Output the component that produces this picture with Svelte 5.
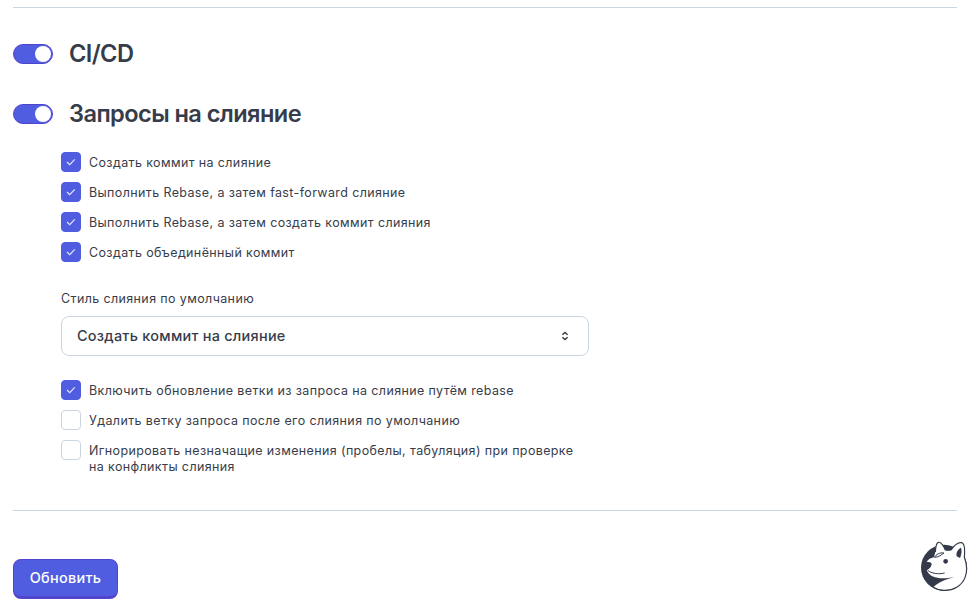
<script lang="ts">
	let cicd = $state(true);
	let mergeRequests = $state(true);

	let mergeStyles = $state([
		{ label: 'Создать коммит на слияние', checked: true },
		{ label: 'Выполнить Rebase, а затем fast-forward слияние', checked: true },
		{ label: 'Выполнить Rebase, а затем создать коммит слияния', checked: true },
		{ label: 'Создать объединённый коммит', checked: true }
	]);

	let options = $state([
		{ label: 'Включить обновление ветки из запроса на слияние путём rebase', checked: true },
		{ label: 'Удалить ветку запроса после его слияния по умолчанию', checked: false },
		{
			label: 'Игнорировать незначащие изменения (пробелы, табуляция) при проверке на конфликты слияния',
			checked: false
		}
	]);
</script>

{#snippet checkbox(item: { label: string; checked: boolean })}
	<label class="check">
		<input type="checkbox" bind:checked={item.checked} />
		<span class="box">
			{#if item.checked}
				<svg width="10" height="8" viewBox="0 0 10 8">
					<path d="M1 4l2.7 2.6L8.8 1.4" fill="none" stroke="#e4e7fb" stroke-width="1.2" />
				</svg>
			{/if}
		</span>
		<span class="check-text">{item.label}</span>
	</label>
{/snippet}

<main class="settings">
	<hr />

	<section class="unit">
		<label class="toggle-row">
			<input type="checkbox" bind:checked={cicd} />
			<span class="toggle" class:on={cicd}><span class="knob"></span></span>
			<h2>CI/CD</h2>
		</label>
	</section>

	<section class="unit">
		<label class="toggle-row">
			<input type="checkbox" bind:checked={mergeRequests} />
			<span class="toggle" class:on={mergeRequests}><span class="knob"></span></span>
			<h2>Запросы на слияние</h2>
		</label>

		{#if mergeRequests}
			<div class="unit-body">
				<div class="checks">
					{#each mergeStyles as item}
						{@render checkbox(item)}
					{/each}
				</div>

				<div class="field">
					<span class="field-label">Стиль слияния по умолчанию</span>
					<button class="select" type="button">
						<span>Создать коммит на слияние</span>
						<svg width="8" height="10" viewBox="0 0 8 10">
							<path
								d="M1.4 3.7L4 1.4l2.6 2.3M1.4 6.3L4 8.6l2.6-2.3"
								fill="none"
								stroke="#323844"
								stroke-width="1.4"
							/>
						</svg>
					</button>
				</div>

				<div class="checks">
					{#each options as item}
						{@render checkbox(item)}
					{/each}
				</div>
			</div>
		{/if}
	</section>

	<hr />

	<button class="submit" type="button">Обновить</button>
</main>

<!-- floating helper -->
<button class="mascot" type="button" aria-label="Помощь">
	<svg width="48" height="52" viewBox="36 30 144 156">
		<circle cx="108" cy="113" r="69" fill="#343a49" />
		<path
			d="M82 66C83 51 86 38 91 37C98 35 107 47 112 60C118 61 124 61 130 59C137 48 150 36 161 38C169 40 171 60 169 82C177 102 179 122 171 143C161 168 136 182 108 181C96 181 85 178 76 172C90 157 112 149 139 141C104 148 68 148 56 121C65 116 71 110 69 101C67 97 61 97 56 96C60 87 68 85 78 81L82 66Z"
			fill="#fff"
		/>
		<path
			d="M82 66C83 51 86 38 91 37C98 35 107 47 112 60C118 61 124 61 130 59C137 48 150 36 161 38C169 40 171 60 169 82C177 102 179 122 171 143C161 168 136 182 108 181C96 181 85 178 76 172"
			fill="none"
			stroke="#343a49"
			stroke-width="3.5"
		/>
		<path d="M146 79C143 68 150 57 159 53C162 62 161 72 156 84Z" fill="#343a49" />
		<path d="M79 82C85 73 95 67 108 69C99 74 94 82 79 82Z" fill="#fff" stroke="#343a49" stroke-width="3" />
		<path d="M54 97C61 94 70 97 71 101C71 108 64 115 59 116Z" fill="#343a49" />
		<path d="M59 121C70 130 91 134 110 129" fill="none" stroke="#343a49" stroke-width="3" />
		<circle cx="113" cy="94" r="7" fill="#343a49" />
	</svg>
</button>

<style>
	:global(body) {
		margin: 0;
		background: #fff;
	}

	.settings {
		padding: 7px 21px 0 13px;
		font-family: 'Inter', sans-serif;
		color: #363c4a;
	}

	hr {
		height: 1px;
		margin: 0;
		border: none;
		background: #cbd5e1;
	}

	input {
		position: absolute;
		opacity: 0;
		pointer-events: none;
	}

	.unit {
		padding-top: 30px;
	}

	.toggle-row {
		display: flex;
		align-items: center;
		gap: 16px;
		height: 32px;
		cursor: pointer;
	}

	.unit + .unit {
		padding-top: 28px;
	}

	h2 {
		margin: 0;
		font-size: 23.6px;
		line-height: 32px;
		font-weight: 600;
		letter-spacing: -0.58px;
	}

	.toggle {
		display: flex;
		box-sizing: border-box;
		width: 40px;
		height: 20px;
		padding: 1px;
		border: 1px solid #cbd5e1;
		border-radius: 10px;
		background: #cbd5e1;
	}

	.toggle.on {
		justify-content: flex-end;
		border-color: #5145cd;
		background: #505de1;
	}

	.knob {
		width: 16px;
		height: 16px;
		border-radius: 50%;
		background: #fff;
	}

	.unit-body {
		width: 528px;
		padding: 22px 0 38px 48px;
	}

	.checks {
		display: flex;
		flex-direction: column;
		gap: 10px;
	}

	.check {
		display: flex;
		align-items: flex-start;
		gap: 8px;
		cursor: pointer;
	}

	.box {
		display: flex;
		align-items: center;
		justify-content: center;
		flex: none;
		box-sizing: border-box;
		width: 20px;
		height: 20px;
		border: 1px solid #cbd5e1;
		border-radius: 4px;
		background: #fff;
	}

	input:checked + .box {
		border-color: #505de1;
		background: #505de1;
	}

	.check-text {
		padding-top: 3px;
		font-size: 12.48px;
		line-height: 16px;
		letter-spacing: 0.39px;
		margin-bottom: -3px;
	}

	.field {
		display: flex;
		flex-direction: column;
		gap: 9px;
		padding: 29px 0 24px;
	}

	.field-label {
		font-size: 12.48px;
		line-height: 16px;
		letter-spacing: 0.39px;
	}

	.select {
		display: flex;
		align-items: center;
		justify-content: space-between;
		box-sizing: border-box;
		height: 40px;
		padding: 0 19px 0 15px;
		border: 1px solid #cbd5e1;
		border-radius: 8px;
		background: #fff;
		color: #363c4a;
		font: 500 14.48px/20px 'Inter', sans-serif;
		letter-spacing: 0.25px;
		cursor: pointer;
	}

	.submit {
		display: block;
		box-sizing: border-box;
		width: 105px;
		height: 40px;
		margin-top: 48px;
		padding: 0;
		border: 1px solid #5145cd;
		border-bottom-width: 3px;
		border-radius: 8px;
		background: #505de1;
		color: #fff;
		font: 500 14.48px/20px 'Inter', sans-serif;
		letter-spacing: 0.28px;
		cursor: pointer;
	}

	.mascot {
		position: fixed;
		right: 10px;
		bottom: 17px;
		width: 48px;
		height: 52px;
		padding: 0;
		border: none;
		background: none;
		cursor: pointer;
	}

	.mascot svg {
		display: block;
	}
</style>
